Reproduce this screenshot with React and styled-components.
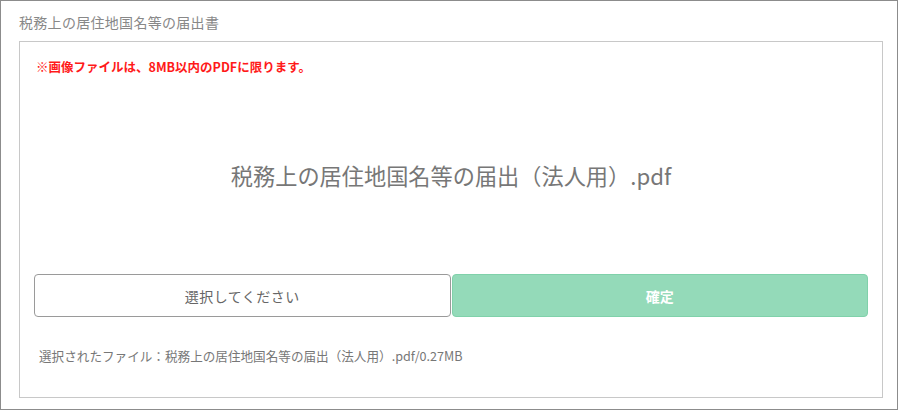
import React from "react";
import styled, { createGlobalStyle } from "styled-components";

const GlobalStyle = createGlobalStyle`
  html, body {
    margin: 0;
    padding: 0;
    background: #ffffff;
  }
  body {
    font-family: "Noto Sans CJK JP", "Noto Sans", sans-serif;
  }
  * {
    box-sizing: border-box;
  }
`;

const App = () => {
    const fileName = "税務上の居住地国名等の届出（法人用）.pdf";

    return (
        <>
            <GlobalStyle />
            <Frame>
                <Title>税務上の居住地国名等の届出書</Title>
                <Panel>
                    <Note>※画像ファイルは、8MB以内のPDFに限ります。</Note>
                    <Preview>{fileName}</Preview>
                    <Buttons>
                        <SelectButton type="button">選択してください</SelectButton>
                        <SubmitButton type="button">確定</SubmitButton>
                    </Buttons>
                    <Selected>選択されたファイル：{fileName}/0.27MB</Selected>
                </Panel>
            </Frame>
        </>
    );
};

const Frame = styled.div`
  width: 898px;
  height: 410px;
  border: 1px solid #8c8c8c;
  padding: 0 14px 11px 18px;
  display: flex;
  flex-direction: column;
  background: #fff;
`;

const Title = styled.div`
  height: 40px;
  padding-top: 2px;
  display: flex;
  align-items: center;
  font-size: 14px;
  color: #888;
  letter-spacing: 0.3px;
`;

const Panel = styled.div`
  flex: 1;
  border: 1px solid #c8c8c8;
  padding: 16px 14px 0;
  display: flex;
  flex-direction: column;
`;

const Note = styled.p`
  margin: 0 0 0 2px;
  font-size: 12.5px;
  line-height: 18px;
  font-weight: 700;
  color: #ff1a1a;
`;

const Preview = styled.div`
  height: 198px;
  display: flex;
  align-items: center;
  justify-content: center;
  font-size: 22.2px;
  color: #777;
`;

const Buttons = styled.div`
  display: grid;
  grid-template-columns: 1fr 1fr;
  gap: 1px;
`;

const BaseButton = styled.button`
  height: 43px;
  border-radius: 4px;
  font-family: inherit;
  font-size: 14px;
  cursor: pointer;
`;

const SelectButton = styled(BaseButton)`
  background: #fff;
  border: 1px solid #9a9a9a;
  color: #666;
  letter-spacing: 0.5px;
`;

const SubmitButton = styled(BaseButton)`
  background: #94dab9;
  border: 1px solid #80d1aa;
  color: #fff;
  font-weight: 700;
`;

const Selected = styled.p`
  margin: 30px 0 0 5px;
  font-size: 12.6px;
  line-height: 18px;
  color: #777;
`;

export default App;
